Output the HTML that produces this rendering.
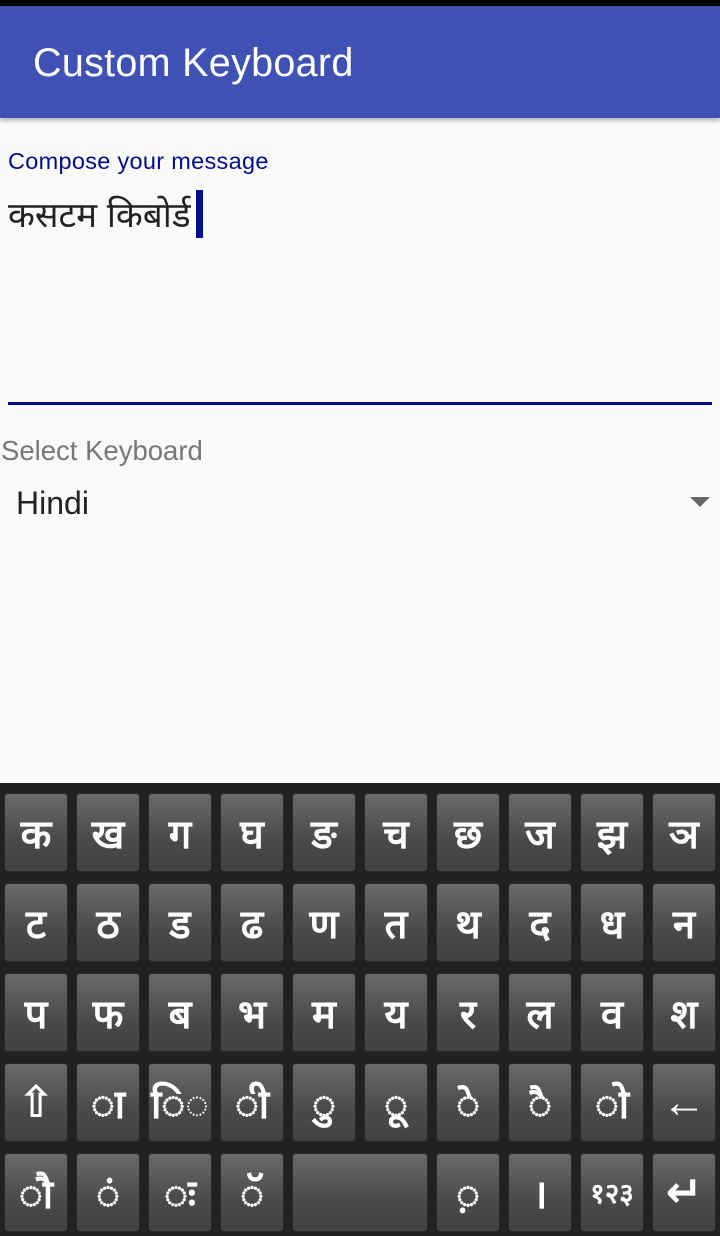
<!DOCTYPE html>
<html><head><meta charset="utf-8"><style>
*{margin:0;padding:0;box-sizing:border-box}
body{width:720px;height:1236px;background:#fafafa;position:relative;overflow:hidden;font-family:"Liberation Sans","DejaVu Sans",sans-serif}
.sb{position:absolute;left:0;top:0;width:720px;height:6px;background:#000}
.ab{position:absolute;left:0;top:6px;width:720px;height:112px;background:#3f51b5;box-shadow:0 2px 5px rgba(0,0,0,.35)}
.ab span{position:absolute;left:33px;top:35px;color:#fff;font-size:39.5px;letter-spacing:0.3px}
.lab{position:absolute;left:8px;top:148px;color:#000d8c;font-size:23.5px;letter-spacing:0.3px}
.txt{position:absolute;left:8px;top:191px;color:#222;font-size:35px;font-family:"Liberation Sans","DejaVu Sans",sans-serif}
.cur{position:absolute;left:196px;top:190px;width:7px;height:48px;background:#000d8c}
.line{position:absolute;left:8px;top:402px;width:704px;height:3px;background:#000d8c}
.sk{position:absolute;left:1px;top:435px;color:#777;font-size:27.5px}
.hi{position:absolute;left:16px;top:485px;color:#222;font-size:32px}
.tri{position:absolute;left:690px;top:497px;width:0;height:0;border-left:10px solid transparent;border-right:10px solid transparent;border-top:10px solid #666}
.kb{position:absolute;left:0;top:783px;width:720px;height:453px;background:#212121}
.k{position:absolute;width:64px;height:79px;border-radius:4px;background:linear-gradient(#6a6a6a,#4a4a4a 60%,#414141);border:1px solid #2a2a2a;color:#fff;font-size:40px;font-weight:bold;display:flex;align-items:center;justify-content:center;font-family:"Liberation Sans","DejaVu Sans",sans-serif}
</style></head><body>
<div class="sb"></div>
<div class="ab"><span>Custom Keyboard</span></div>
<div class="lab">Compose your message</div>
<div class="txt">कसटम किबोर्ड</div>
<div class="cur"></div>
<div class="line"></div>
<div class="sk">Select Keyboard</div>
<div class="hi">Hindi</div>
<div class="tri"></div>
<div class="kb"></div>
<div id="keys"></div>
<script>
var rows=[["क","ख","ग","घ","ङ","च","छ","ज","झ","ञ"],["ट","ठ","ड","ढ","ण","त","थ","द","ध","न"],["प","फ","ब","भ","म","य","र","ल","व","श"],["⇧","◌ा","ि◌","◌ी","◌ु","◌ू","◌े","◌ै","◌ो","←"],["◌ौ","◌ं","◌ः","◌ॅ","",null,"◌़","।","१२३","↵"]];
var h="";
rows.forEach(function(r,ri){var y=793+ri*90;r.forEach(function(c,ci){if(c===null)return;var x=4+ci*72;var w=64;if(ri==4&&ci==4)w=136;var fs=(c=="१२३")?28:40;if(c=="⇧"||c=="←"||c=="↵")fs=44;h+='<div class="k" style="left:'+x+'px;top:'+y+'px;width:'+w+'px;font-size:'+fs+'px">'+c+'</div>';});});
document.getElementById("keys").innerHTML=h;
</script>
</body></html>
